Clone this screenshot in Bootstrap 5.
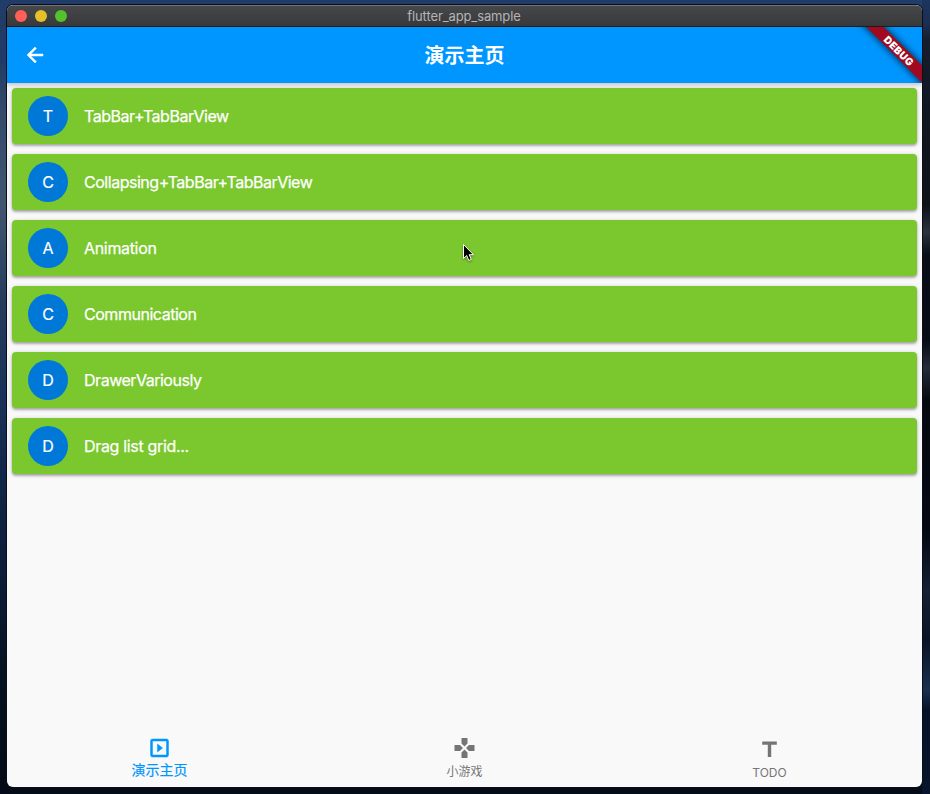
<!DOCTYPE html>
<html lang="zh-CN">
<head>
<meta charset="utf-8">
<title>flutter_app_sample</title>
<link href="https://cdn.jsdelivr.net/npm/bootstrap@5.3.0/dist/css/bootstrap.min.css" rel="stylesheet">
<style>
html, body { height: 100%; }
body {
  font-family: Inter, "Noto Sans CJK SC", sans-serif;
  padding: 5px 8px 7px 7px;
  overflow: hidden;
  background: linear-gradient(#213c68 0, #223b66 60px, #344a6b 110px, #40566f 205px, #263c5d 300px, #1a3358 390px, #11284a 470px, #0b1d38 570px, #04101f 690px, #030b16 794px);
}
.right-edge { position: absolute; left: 922px; top: 0; width: 8px; height: 794px;
  background: linear-gradient(#1c355f 0, #1b2e50 24px, #151e2e 40px, #10151e 130px, #0c111a 205px, #2b323d 232px, #080d17 255px, #060b15 340px, #252c38 368px, #05090f 400px, #030812 530px, #152033 590px, #0a1426 640px, #1a2f4d 690px, #06122a 710px, #07142a 794px); }
.app-window { height: 782px; width: 915px; border-radius: 6px; background: #f9f9f9; box-shadow: 0 0 0 1px #080e1a; }
.title-bar { height: 22px; background: linear-gradient(#46474a, #38393b); border-top: 1px solid #727376; border-bottom: 1px solid #1c1c1e; padding-left: 8px; flex: none; }
.light { width: 12px; height: 12px; border-radius: 50%; }
.title-text { color: #b4b4b5; font-size: 13px; line-height: 20px; margin-left: -61px; letter-spacing: -.12px; }
.app-bar { height: 56px; flex: none; background: #0096ff; color: #fff; }
.bar-wrap { box-shadow: 0 2px 4px rgba(0,0,0,.22); z-index: 1; }
.page-title { font-size: 20px; line-height: 58px; font-weight: 600; }
.debug-ribbon { position: absolute; width: 96px; height: 12px; right: -25px; top: 17.9px; transform: rotate(45deg); background: #a10920; box-shadow: 0 0 7px 1px rgba(0,0,0,.7); color: #fff; font: 900 10.2px/12px Inter, sans-serif; text-align: center; letter-spacing: .4px; }
.demo-list { padding: 5px; gap: 10px; }
.demo-item { height: 56px; border-radius: 4px; background: #7ac72e; color: #fff; padding-left: 16px; gap: 16px; font-size: 16px; box-shadow: 0 2px 2px rgba(0,0,0,.2), 0 1px 4px rgba(0,0,0,.22); }
.avatar { width: 40px; height: 40px; background: #0078d7; flex: none; -webkit-text-stroke: .2px #fff; }
.item-label { letter-spacing: -.47px; -webkit-text-stroke: .25px #fff; }
.item-label.loose { letter-spacing: -.33px; }
.bottom-nav { height: 58px; }
.nav-cell { flex: 1 1 0; color: #757575; font-size: 12px; line-height: 16px; padding-top: 7px; }
.nav-cell.current { color: #0096ff; font-size: 14px; -webkit-text-stroke: .2px #0096ff; }
.pointer { position: absolute; left: 462px; top: 243px; z-index: 3; filter: drop-shadow(0 1px 1px rgba(0,0,0,.4)); }
</style>
<script src="https://cdn.jsdelivr.net/npm/bootstrap@5.3.0/dist/js/bootstrap.bundle.min.js"></script>
</head>
<body>
<div class="right-edge"></div>
<main class="app-window d-flex flex-column overflow-hidden position-relative">
  <div class="title-bar d-flex align-items-center">
    <div class="d-flex gap-2">
      <span class="light" style="background:#ff5f57"></span>
      <span class="light" style="background:#e6c029"></span>
      <span class="light" style="background:#53c22b"></span>
    </div>
    <div class="title-text flex-fill text-center">flutter_app_sample</div>
  </div>
  <div class="bar-wrap">
    <header class="app-bar position-relative overflow-hidden text-center">
      <svg class="position-absolute top-50 translate-middle-y" style="left:16px" width="24" height="24" viewBox="0 0 24 24" fill="#fff" stroke="#fff" stroke-width=".5"><path d="M20 11H7.83l5.59-5.59L12 4l-8 8 8 8 1.41-1.41L7.83 13H20z"/></svg>
      <h1 class="page-title m-0">演示主页</h1>
      <div class="debug-ribbon">DEBUG</div>
    </header>
  </div>
  <section class="demo-list d-flex flex-column flex-fill">
    <div class="demo-item d-flex align-items-center"><span class="avatar rounded-circle d-flex align-items-center justify-content-center">T</span><span class="item-label">TabBar+TabBarView</span></div>
    <div class="demo-item d-flex align-items-center"><span class="avatar rounded-circle d-flex align-items-center justify-content-center">C</span><span class="item-label">Collapsing+TabBar+TabBarView</span></div>
    <div class="demo-item d-flex align-items-center"><span class="avatar rounded-circle d-flex align-items-center justify-content-center">A</span><span class="item-label loose">Animation</span></div>
    <div class="demo-item d-flex align-items-center"><span class="avatar rounded-circle d-flex align-items-center justify-content-center">C</span><span class="item-label">Communication</span></div>
    <div class="demo-item d-flex align-items-center"><span class="avatar rounded-circle d-flex align-items-center justify-content-center">D</span><span class="item-label">DrawerVariously</span></div>
    <div class="demo-item d-flex align-items-center"><span class="avatar rounded-circle d-flex align-items-center justify-content-center">D</span><span class="item-label loose">Drag list grid...</span></div>
  </section>
  <nav class="bottom-nav d-flex text-center">
    <div class="nav-cell current d-flex flex-column align-items-center">
      <svg width="25" height="24" viewBox="-.5 0 25 24" fill="currentColor" stroke="currentColor" stroke-width=".5"><path d="M10 8v8l5-4zM19 3H5a2 2 0 0 0-2 2v14a2 2 0 0 0 2 2h14a2 2 0 0 0 2-2V5a2 2 0 0 0-2-2zm0 16H5V5h14z"/></svg>
      <span style="margin-top:2px">演示主页</span>
    </div>
    <div class="nav-cell d-flex flex-column align-items-center">
      <svg width="25" height="24" viewBox="-.5 0 25 24" fill="currentColor"><path d="M15 7.500V2H9v5.500l3 3zM7.500 9H2v6h5.500l3-3zM9 16.500V22h6v-5.500l-3-3zM16.500 9l-3 3 3 3H22V9z"/></svg>
      <span style="margin-top:4px">小游戏</span>
    </div>
    <div class="nav-cell d-flex flex-column align-items-center pt-2">
      <svg width="25" height="24" viewBox="-.5 0 25 24" fill="currentColor"><path d="M4.700 4.500v3.300h5.600v12.200h3.400V7.800h5.600V4.500z"/></svg>
      <span style="margin-top:4px">TODO</span>
    </div>
  </nav>
</main>
<svg class="pointer" width="13" height="19" viewBox="0 0 13 19"><path d="M1.500 1.500v14l3.200-3 2.100 5 2.500-1.100-2.100-4.700h4.300z" fill="#000" stroke="#fff" stroke-width="1"/></svg>
</body>
</html>
